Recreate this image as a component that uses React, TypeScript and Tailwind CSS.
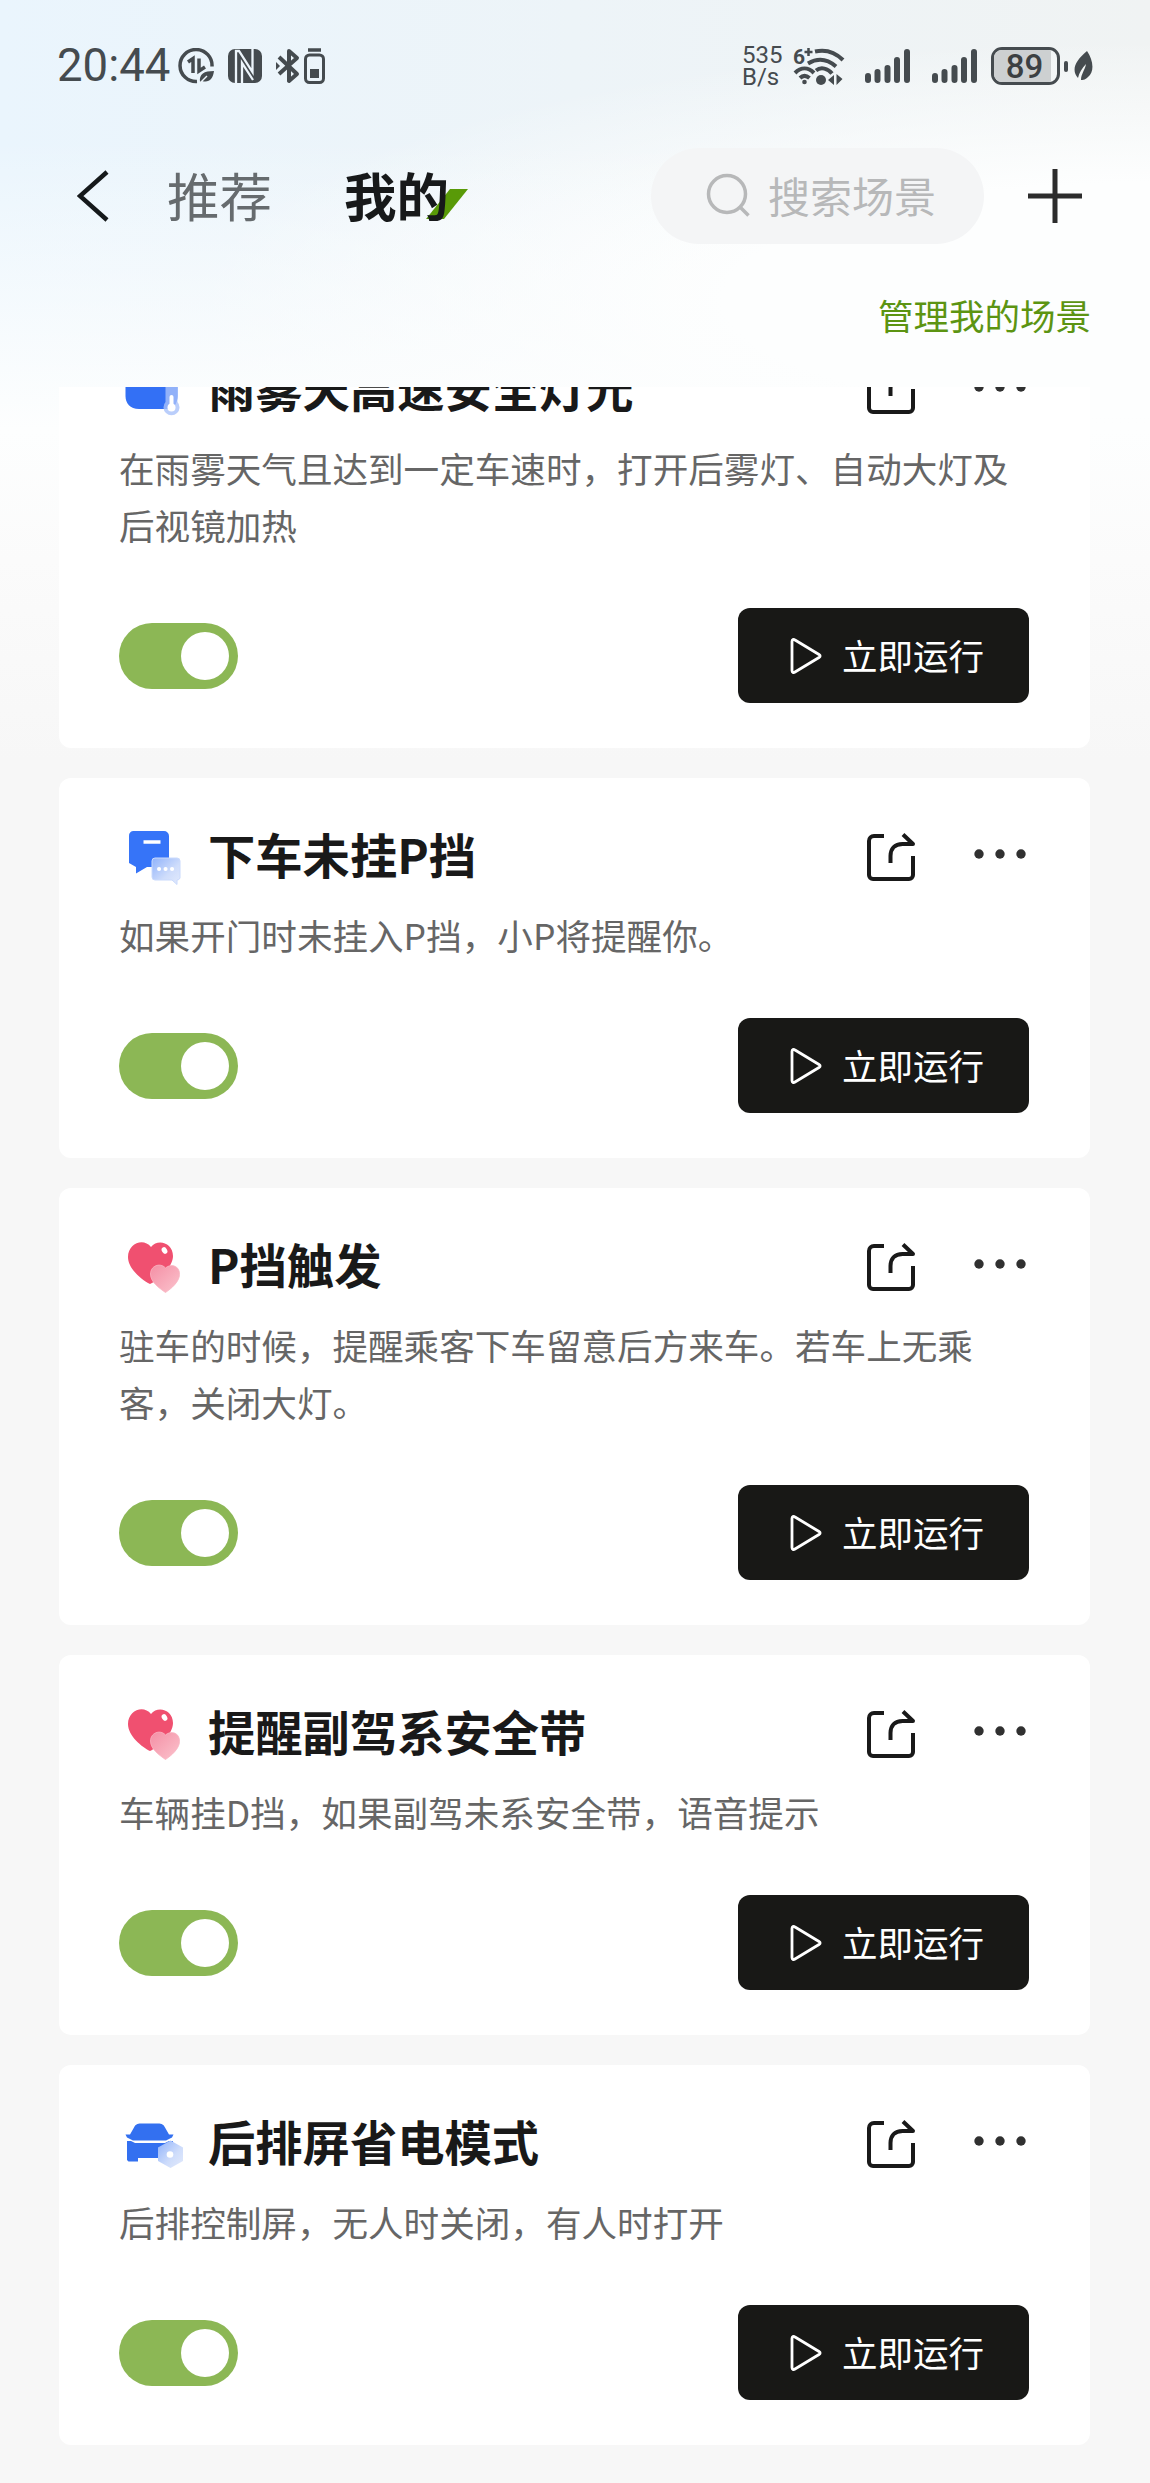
import React, { useState } from "react";

type SceneIcon = "weather" | "message" | "heart" | "car";

interface Scene {
  title: string;
  lines: string[];
  icon: SceneIcon;
}

const scenes: Scene[] = [
  {
    title: "雨雾天高速安全灯光",
    lines: ["在雨雾天气且达到一定车速时，打开后雾灯、自动大灯及", "后视镜加热"],
    icon: "weather",
  },
  { title: "下车未挂P挡", lines: ["如果开门时未挂入P挡，小P将提醒你。"], icon: "message" },
  {
    title: "P挡触发",
    lines: ["驻车的时候，提醒乘客下车留意后方来车。若车上无乘", "客，关闭大灯。"],
    icon: "heart",
  },
  { title: "提醒副驾系安全带", lines: ["车辆挂D挡，如果副驾未系安全带，语音提示"], icon: "heart" },
  { title: "后排屏省电模式", lines: ["后排控制屏，无人时关闭，有人时打开"], icon: "car" },
];

const SceneGlyph = ({ icon }: { icon: SceneIcon }) => (
  <svg viewBox="0 0 60 60" className="w-[60px] h-[60px] shrink-0 overflow-visible">
    <defs>
      <linearGradient id="blueGlass" x1="0" y1="0" x2="1" y2="1">
        <stop offset="0" stopColor="#8fb2fb" />
        <stop offset="0.6" stopColor="#cfddfb" />
        <stop offset="1" stopColor="#e2eafc" />
      </linearGradient>
      <linearGradient id="pinkGlass" x1="0" y1="0" x2="1" y2="1">
        <stop offset="0" stopColor="#f48fa5" />
        <stop offset="1" stopColor="#fbc3cd" />
      </linearGradient>
    </defs>
    {icon === "weather" && (
      <>
        <path d="M20 49C11 49 6.500 43 6.500 36V20h52v16c0 8-4 13-11 13Z" fill="#3370f5" />
        <path d="M46.500 20h12v22a8 8 0 1 1-12 0Z" fill="#a9c2fa" fillOpacity="0.8" />
        <path d="M52.500 37v10" stroke="#fff" strokeWidth="4" strokeLinecap="round" />
        <circle cx="52.500" cy="47.500" r="4" fill="#fff" />
      </>
    )}
    {icon === "message" && (
      <>
        <path d="M14 4h31a5 5 0 0 1 5 5v27a4 4 0 0 1-4 4H28l-11 6.500V40l-7-4V9a5 5 0 0 1 4-5Z" fill="#3674f8" />
        <path d="M24.500 15h17" stroke="#fff" strokeWidth="3.500" />
        <path d="M36 31h22a3 3 0 0 1 3 3v17a3 3 0 0 1-3 2v4.500L53 53H36a3 3 0 0 1-3-3V34a3 3 0 0 1 3-3Z" fill="url(#blueGlass)" stroke="#cadafc" />
        <path d="M40 42h.1M46.500 42h.1M53 42h.1" stroke="#fff" strokeWidth="4" strokeLinecap="round" />
      </>
    )}
    {icon === "heart" && (
      <>
        <path d="M31 47C23 43 9 32 9 20 9 7 24 0 32 10c7-9 22-4 22 9 0 11-14 24-23 28Z" fill="#f05070" />
        <ellipse cx="45.500" cy="13.500" rx="2.600" ry="3.500" fill="#fff" transform="rotate(-30 45.500 13.500)" />
        <path d="M46.500 55.500C40 51 31.500 45 31.500 37c0-8 9.500-12 15-6 5.500-5 14.500-2 14 6.500 0 7-8 14-14 18Z" fill="url(#pinkGlass)" stroke="#f9b4c1" strokeWidth="0.800" />
      </>
    )}
    {icon === "car" && (
      <>
        <path d="M22 9.500h17c4 0 5.500 1 7 4l4 7h4.500l-1.500 3-6 3H14l-6-3-1.500-3H11l4-7c1.500-3 3-4 7-4Z" fill="#3370f0" />
        <path d="M8 27h4l4 2h30l4-2h4v20.500H42V44H19v3.500H9.500L8 46Z" fill="#3370f0" />
        <path d="m51.500 26.500 12.500 7v13.500l-12.500 7-12.500-7V33.500Z" fill="url(#blueGlass)" />
        <circle cx="51" cy="40.500" r="3.300" fill="#fff" />
      </>
    )}
  </svg>
);

const StatusBar = () => (
  <div className="h-[132px] flex items-center justify-between pl-[57px] pr-[57px] text-[#454b4f] font-[Roboto]">
    <div className="flex items-center">
      <span className="w-[121px] text-[45.500px] leading-none">20:44</span>
      {/* data saver */}
      <svg viewBox="0 0 36 36" className="w-9 h-9" fill="none" stroke="currentColor" strokeWidth="3.500">
        <path d="M19 33.500A16 16 0 1 1 34 18.500" />
        <path d="M10 14l5-3.500V25M21 10.500V23l6-4" strokeWidth="3.500" />
        <path d="M22 34c-1-8 4-11 14-11-1 8-5 12-12 10Z" fill="currentColor" stroke="none" />
        <path d="M22 35l7-7" stroke="#edf5fb" strokeWidth="1.500" />
      </svg>
      {/* nfc */}
      <svg viewBox="0 0 34 34" className="w-[34px] h-[34px] ml-[14px]">
        <rect x="0" y="0" width="34" height="34" rx="7" fill="currentColor" />
        <path d="M8 34V2h3l13.500 21V0M14 34V14l11 17" fill="none" stroke="#edf5fb" strokeWidth="2.300" />
      </svg>
      {/* bluetooth + device battery */}
      <svg viewBox="0 0 50 36" className="w-[50px] h-9 ml-[14px]" fill="none" stroke="currentColor" strokeWidth="4">
        <path d="M3 9l18 17-8 7V3l8 7L3 26" strokeLinejoin="round" />
        <path d="M0 14v8l4-4Z" fill="currentColor" stroke="none" />
        <rect x="29.500" y="7" width="18" height="27.500" rx="4" strokeWidth="3" />
        <path d="M32 2h13" strokeWidth="3.500" />
        <rect x="34" y="21" width="9" height="9" fill="currentColor" stroke="none" />
      </svg>
    </div>
    <div className="flex items-center">
      <div className="w-[52px] text-[24px] leading-[22px] flex flex-col">
        <span>535</span>
        <span>B/s</span>
      </div>
      <svg viewBox="0 0 50 38" className="w-[50px] h-[38px] overflow-visible" fill="none" stroke="currentColor" strokeWidth="4">
        <text x="-1" y="17" fontSize="21" fontWeight="bold" fill="currentColor" stroke="none">6</text>
        <path d="M14.500 9V1M10.500 5h8" strokeWidth="2.500" />
        <path d="M21 4.500C32 2 42 6 49 13M14 16.500c10-6 20-4 28 3M1 26c6-6 13-6 19 0M22 23.500c5-4 12-2 16 3M6 31c3-3 6-3 9.500 0" />
        <circle cx="10.500" cy="35" r="2.300" fill="currentColor" stroke="none" />
        <circle cx="27" cy="33" r="5" fill="currentColor" stroke="none" />
        <path d="M34 33l6-5v10ZM48.500 32l-6-5v11Z" fill="currentColor" stroke="none" />
      </svg>
      {["sim1", "sim2"].map((sim) => (
        <svg key={sim} viewBox="0 0 46 36" className="w-[46px] h-9 ml-[21px]" stroke="currentColor" strokeWidth="6" strokeLinecap="round">
          <path d="M3 28v4M12.500 24v8M22.500 20v12M32 12v20M42 4v28" />
        </svg>
      ))}
      <div className="ml-[13px] w-[69px] h-[38px] rounded-[11px] border-[3px] border-current flex overflow-hidden">
        <div className="w-[57px] pl-1 bg-[#cdd0d1] flex items-center justify-center text-[33px] font-medium leading-none text-[#3c4042]">
          89
        </div>
      </div>
      <div className="ml-[4px] w-1 h-[11px] rounded-full bg-current" />
      <svg viewBox="0 0 20 30" className="w-5 h-[30px] ml-[5px]">
        <path d="M14 0c6 9 8 20 1 26-3 3-5 3-7 3 0-6 4-10 5-16-4 4-7 9-8 14C-2 19 2 10 14 0Z" fill="currentColor" />
      </svg>
    </div>
  </div>
);

const Header = () => (
  <header className="shrink-0 h-[387px]">
    <StatusBar />
    <div className="h-32 flex items-center pl-[77px]">
      <svg viewBox="0 0 32 52" className="w-8 h-[52px]" fill="none" stroke="#15191b" strokeWidth="4.500">
        <path d="M30 2 3 26l27 24" />
      </svg>
      <button className="ml-[58px] mb-[3px] text-[52.500px] leading-none text-[#666b6e]">推荐</button>
      <button className="relative ml-[72px] mb-[3px] text-[52.500px] leading-none font-bold text-[#17191a]">
        <svg viewBox="0 0 42 30" className="absolute left-[82px] top-[21px] w-[42px] h-[30px]">
          <path d="M24 0h18L18 30H0Z" fill="#599a08" />
        </svg>
        <span className="relative">我的</span>
      </button>
      <div className="ml-[202px] w-[333px] h-24 rounded-full bg-[#f4f5f6] flex items-center pl-[55px] text-[#b7b8b9]">
        <svg viewBox="0 0 46 46" className="w-[46px] h-[46px]" fill="none" stroke="currentColor" strokeWidth="3.500">
          <circle cx="21" cy="21" r="18.500" />
          <path d="m34 34 8.500 8.500" />
        </svg>
        <span className="ml-[16px] mb-[3px] text-[42px] leading-none">搜索场景</span>
      </div>
      <svg viewBox="0 0 54 54" className="w-[54px] h-[54px] ml-11" stroke="#2c2c2c" strokeWidth="5">
        <path d="M27 0v54M0 27h54" />
      </svg>
    </div>
    <div className="flex justify-end pr-[59px] pt-[36px]">
      <button className="text-[35.500px] leading-[38px] text-[#5c9412]">管理我的场景</button>
    </div>
  </header>
);

const SceneCard = ({ scene }: { scene: Scene }) => {
  const [enabled, setEnabled] = useState(true);

  return (
    <section className="shrink-0 w-[1031px] bg-white rounded-xl pl-[60px] pr-[61px] pt-[49px] pb-[45px]">
      <div className="flex items-center h-[60px]">
        <SceneGlyph icon={scene.icon} />
        <h2 className="ml-[29px] mb-[7px] flex-1 text-[47.300px] leading-none font-bold text-[#191919]">{scene.title}</h2>
        <svg viewBox="0 0 50 50" className="w-[50px] h-[50px]" fill="none" stroke="#191919" strokeWidth="4">
          <path d="M18 4H8a5 5 0 0 0-5 5v34a4 4 0 0 0 4 4h36a4 4 0 0 0 4-4V24M24.500 31v-7c0-7 4-12 12-12H47L37 2.500" strokeLinejoin="round" />
        </svg>
        <svg viewBox="0 0 54 10" className="w-[54px] h-[10px] ml-[57px] mb-[6px] mr-[2px]" fill="#303030">
          <circle cx="6" cy="5" r="4.700" />
          <circle cx="27" cy="5" r="4.700" />
          <circle cx="48" cy="5" r="4.700" />
        </svg>
      </div>
      <div className="mt-[19px] text-[35.600px] leading-[57px] text-[#666] whitespace-nowrap">
        {scene.lines.map((line) => (
          <p key={line}>{line}</p>
        ))}
      </div>
      <div className="mt-[55px] flex items-center justify-between">
        <button
          onClick={() => setEnabled(!enabled)}
          className={`w-[119px] h-[66px] rounded-full px-[9px] flex items-center ${
            enabled ? "bg-[#8cb755] justify-end" : "bg-gray-300 justify-start"
          }`}
        >
          <span className="w-12 h-12 rounded-full bg-white" />
        </button>
        <button className="w-[291px] h-[95px] rounded-xl bg-[#181816] text-white flex items-center pl-[52px]">
          <svg viewBox="0 0 32 38" className="w-8 h-[38px]" fill="none" stroke="currentColor" strokeWidth="2.800" strokeLinejoin="round">
            <path d="M2 4.500C2 2.500 3.500 2 5 3l24 14.500c1.500 1 1.500 2 0 3L5 35c-1.500 1-3 .5-3-1.500Z" />
          </svg>
          <span className="ml-[20px] mb-[2px] text-[35.500px] leading-none">立即运行</span>
        </button>
      </div>
    </section>
  );
};

export default function App() {
  return (
    <div className="w-[1150px] h-[2483px] overflow-hidden flex flex-col bg-[#f7f7f7] font-['Noto_Sans_CJK_SC',sans-serif]">
      <div className="flex-1 min-h-0 flex flex-col bg-[linear-gradient(to_bottom,#fdfefe00_0px,#fdfefe00_140px,#fdfefe_430px,#fbfbfb_560px,#f7f7f7_760px),radial-gradient(950px_260px_at_1150px_300px,#fdfefe_45%,#fdfefe00_100%),linear-gradient(to_right,#eaf5fd,#f0f3f3)]">
        <Header />
        {/* the list is scrolled, the first card runs under the header */}
        <main className="flex-1 min-h-0 overflow-hidden flex flex-col pl-[59px] gap-[30px]">
          {scenes.map((scene, i) => (
            <div key={scene.title} className={i === 0 ? "-mt-[76px]" : ""}>
              <SceneCard scene={scene} />
            </div>
          ))}
        </main>
      </div>
    </div>
  );
}
